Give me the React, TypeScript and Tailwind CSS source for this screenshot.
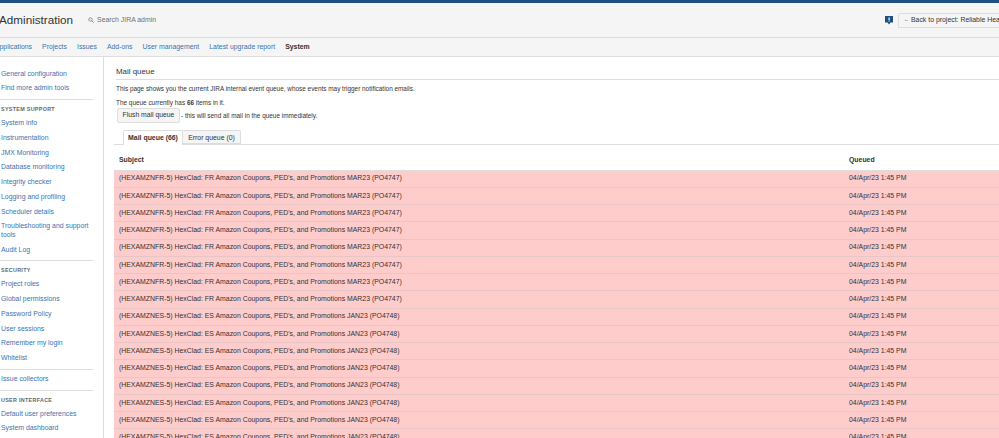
const nfr = "(HEXAMZNFR-5) HexClad: FR Amazon Coupons, PED's, and Promotions MAR23 (PO4747)";
const nes = "(HEXAMZNES-5) HexClad: ES Amazon Coupons, PED's, and Promotions JAN23 (PO4748)";
const rows = [...Array(8).fill(nfr), ...Array(8).fill(nes)];
const tabs = ["Projects", "Issues", "Add-ons", "User management", "Latest upgrade report"];

type Group = { title?: string; links: string[] };
const groups: Group[] = [
  { links: ["General configuration", "Find more admin tools"] },
  { title: "SYSTEM SUPPORT", links: ["System info", "Instrumentation", "JMX Monitoring", "Database monitoring", "Integrity checker", "Logging and profiling", "Scheduler details", "Troubleshooting and support tools", "Audit Log"] },
  { title: "SECURITY", links: ["Project roles", "Global permissions", "Password Policy", "User sessions", "Remember my login", "Whitelist"] },
  { links: ["Issue collectors"] },
  { title: "USER INTERFACE", links: ["Default user preferences", "System dashboard"] },
];

export default function App() {
  return (
    <div className="w-[999px] h-[438px] overflow-hidden bg-white flex flex-col text-[6.9px] text-[#333] font-['Liberation_Sans',Arial,sans-serif]">
      <div className="h-[3px] shrink-0 bg-[#205081]" />
      <header className="h-[34px] shrink-0 bg-[#f5f5f5] flex items-center overflow-hidden">
        <h1 className="text-[11.7px] leading-none text-[#333] -ml-px -mt-px whitespace-nowrap">Administration</h1>
        <div className="flex items-center gap-[3px] ml-[15px] text-[#707070]">
          <svg width="6" height="6" viewBox="0 0 16 16" fill="none" stroke="#707070" strokeWidth="2"><circle cx="6.5" cy="6.5" r="4.5" /><path d="M10 10l5 5" /></svg>
          <span>Search JIRA admin</span>
        </div>
        <div className="ml-auto flex items-center gap-[5px] whitespace-nowrap">
          <svg width="8" height="9" viewBox="0 0 16 18"><path d="M0 0h16v13h-5l-3 4-3-4H0z" fill="#205081" /><rect x="7" y="3" width="2.4" height="5" fill="#fff" /><rect x="7" y="9" width="2.4" height="2" fill="#fff" /></svg>
          <div className="w-[101px] h-[15px] overflow-hidden flex items-center pl-[5px] bg-[#f5f5f5] border border-r-0 border-[#ddd] rounded-l-[2px]">
            <span className="text-[5px] mr-[2px]">←</span>Back to project: Reliable Hea
          </div>
        </div>
      </header>
      <nav className="h-[20px] shrink-0 bg-[#f5f5f5] border-y border-[#ddd] flex items-center gap-[10px] overflow-hidden text-[#3b73af] whitespace-nowrap">
        <span className="-ml-[0.5px]">pplications</span>
        {tabs.map((t) => <span key={t}>{t}</span>)}
        <span className="font-bold text-[#333]">System</span>
      </nav>
      <div className="flex flex-1 min-h-0">
        <aside className="w-[104px] shrink-0 border-r border-[#ddd] pt-[9.5px] pr-[10px] overflow-hidden text-[#3b73af]">
          {groups.map((g, i) => (
            <div key={i} className={i === 0 ? "" : g.title ? "border-t border-[#ddd] mt-[3px] pt-[4px]" : "border-t border-[#ddd] mt-[3px] pt-[2px]"}>
              {g.title && <div className="h-[10px] mb-[2px] text-[5.4px] font-bold tracking-[0.3px] text-[#666] leading-[10px] pl-px">{g.title}</div>}
              {g.links.map((l) => (
                <div key={l} className="leading-[8.5px] py-[3.125px] pl-px">{l}</div>
              ))}
            </div>
          ))}
        </aside>
        <main className="flex-1 min-w-0 pl-[10px] pt-[10px] overflow-hidden">
          <h2 className="ml-[2px] h-[13px] text-[7.9px] leading-[10px] border-b border-[#ddd]">Mail queue</h2>
          <p className="ml-[2px] mt-[3.5px] leading-[9px] text-[6.42px]">This page shows you the current JIRA internal event queue, whose events may trigger notification emails.</p>
          <p className="ml-[2px] mt-[5px] leading-[9px] text-[6.42px]">The queue currently has <b>66</b> items in it.</p>
          <div className="ml-[3px] mt-[1.5px] flex items-center gap-[1px]">
            <button className="h-[15px] w-[63px] bg-[#f5f5f5] border border-[#ddd] rounded-[2px] text-[6.8px]">Flush mail queue</button>
            <span className="text-[6.42px]">- this will send all mail in the queue immediately.</span>
          </div>
          <div className="mt-[7px] flex pl-[9px] border-b border-[#ddd] h-[15px]">
            <div className="h-[15px] w-[60px] text-center bg-white border border-b-0 border-[#ddd] rounded-t-[2px] font-bold leading-[13px]">Mail queue (66)</div>
            <div className="h-[14px] w-[58px] text-center bg-[#f5f5f5] border border-l-0 border-[#ddd] rounded-tr-[2px] leading-[13px]">Error queue (0)</div>
          </div>
          <table className="w-full border-collapse table-fixed">
            <thead>
              <tr className="h-[25px] border-b border-[#ddd]">
                <th className="text-left font-bold pl-[5px] pt-[6px]">Subject</th>
                <th className="text-left font-bold w-[150px] pt-[6px]">Queued</th>
              </tr>
            </thead>
            <tbody>
              {rows.map((r, i) => (
                <tr key={i} className="h-[17.25px] bg-[#ffcccc] border-b border-[#e6c6c6] text-[#333]">
                  <td className="pl-[5px] whitespace-nowrap">{r}</td>
                  <td className="whitespace-nowrap">04/Apr/23 1:45 PM</td>
                </tr>
              ))}
            </tbody>
          </table>
        </main>
      </div>
    </div>
  );
}
